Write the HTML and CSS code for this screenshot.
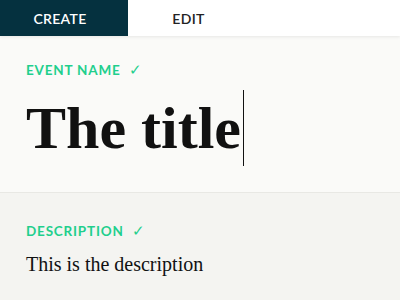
FILE: index.html
```html
<!DOCTYPE html>
<html lang="en">
<head>
  <meta charset="UTF-8">
  <title>Create Event</title>
  <link rel="stylesheet" href="styles.css">
</head>
<body>
  <div class="tabs">
    <div class="tab active">CREATE</div>
    <div class="tab">EDIT</div>
  </div>
  <div class="field field-name">
    <div class="label">EVENT NAME <span class="check">&#10003;</span></div>
    <div class="title">The title<span class="caret"></span></div>
  </div>
  <div class="field field-desc">
    <div class="label">DESCRIPTION <span class="check">&#10003;</span></div>
    <div class="desc">This is the description</div>
  </div>
</body>
</html>
```

FILE: styles.css
```css
body {
  margin: 0;
  padding: 0;
  font-family: 'Lato', 'Liberation Sans', sans-serif;
  background: #f4f4f1;
  color: #111;
}
.tabs {
  display: flex;
  height: 36px;
  background: #fff;
  box-shadow: 0 1px 3px rgba(0,0,0,0.08);
  position: relative;
  z-index: 1;
}
.tab {
  width: 128px;
  display: flex;
  align-items: center;
  justify-content: center;
  font-size: 14px;
  font-weight: 600;
  letter-spacing: 0.3px;
  color: #222;
  padding-right: 8px;
  box-sizing: border-box;
}
.tab.active {
  background: #05313f;
  color: #fff;
}
.tab + .tab {
  width: 117px;
  padding-right: 0;
  padding-left: 4px;
}
.field {
  padding: 25px 26px 0;
}
.field-name {
  background: #fafaf8;
  height: 157px;
  box-sizing: border-box;
  border-bottom: 1px solid #e8e8e4;
}
.label {
  color: #1fcf8d;
  font-size: 13.5px;
  font-weight: 700;
  letter-spacing: 0.8px;
  line-height: 16px;
}
.check {
  margin-left: 4px;
  font-weight: 400;
  font-size: 15px;
}
.title {
  font-family: 'Liberation Serif', serif;
  font-weight: 700;
  font-size: 60px;
  line-height: 76px;
  margin-top: 12px;
  display: flex;
  align-items: center;
}
.caret {
  display: inline-block;
  width: 1px;
  height: 76px;
  background: #111;
  margin-left: 2px;
}
.field-desc {
  padding-top: 29px;
}
.desc {
  font-family: 'Liberation Serif', serif;
  font-size: 20px;
  margin-top: 14px;
}
```
